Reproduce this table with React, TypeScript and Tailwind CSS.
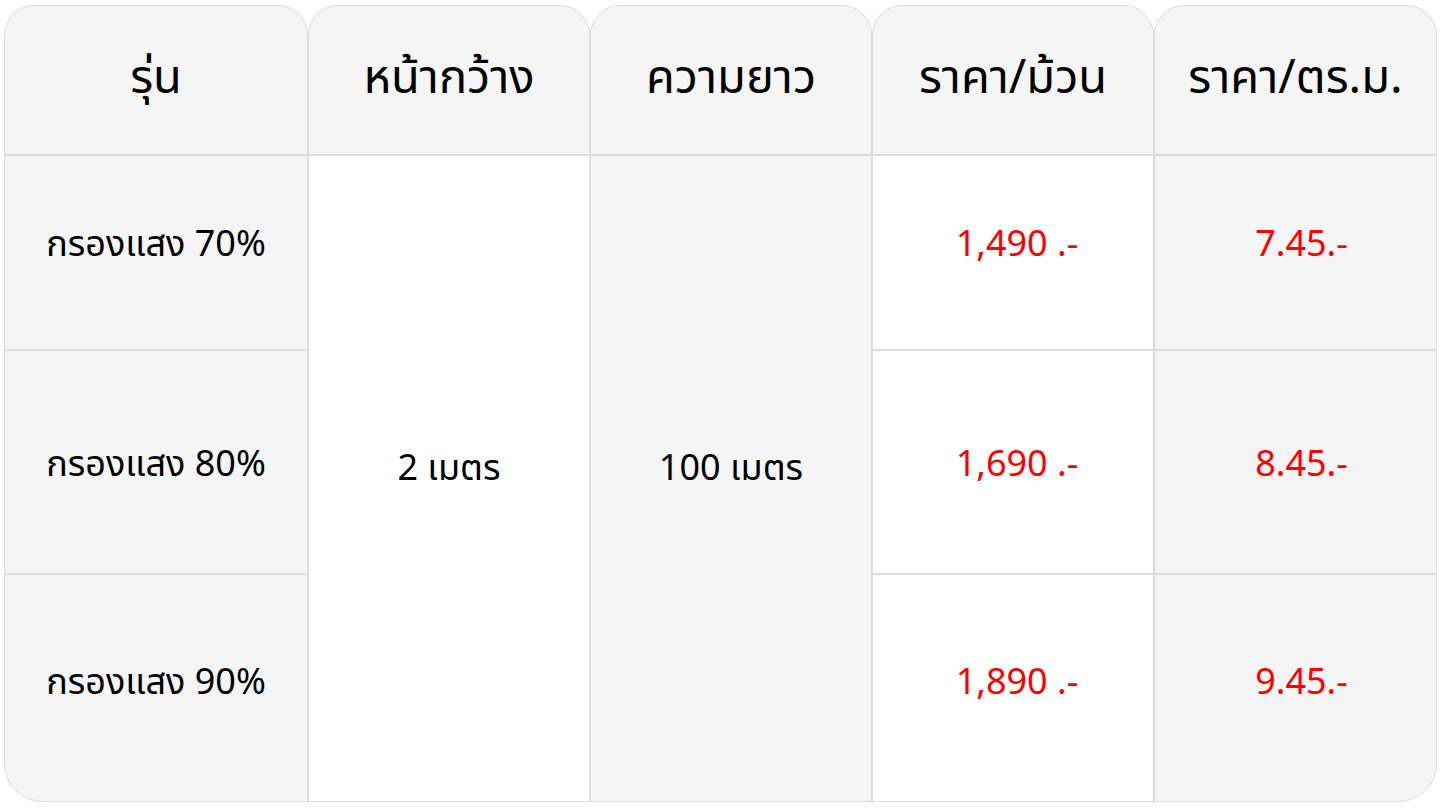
const rows = [
  { model: "กรองแสง 70%", roll: "1,490 .-", sqm: "7.45.-", pad: "pb-[15px]" },
  { model: "กรองแสง 80%", roll: "1,690 .-", sqm: "8.45.-", pad: "pt-[6px]" },
  { model: "กรองแสง 90%", roll: "1,890 .-", sqm: "9.45.-", pad: "pb-[10px]" },
];

const headers = ["รุ่น", "หน้ากว้าง", "ความยาว", "ราคา/ม้วน", "ราคา/ตร.ม."];

const cell = "flex items-center justify-center border border-[#dcdcdc]";

export default function App() {
  return (
    <div className="min-h-screen bg-white pl-[4px] pt-[5px] font-['Noto_Sans_Thai','Noto_Sans',sans-serif] text-black">
      <div className="grid w-[1433px] grid-cols-[304px_282px_282px_282px_283px] grid-rows-[150px_195px_224px_228px]">
        {headers.map((h) => (
          <div
            key={h}
            className={`${cell} rounded-t-[30px] bg-[#f5f5f5] pb-[2px] text-[47px]`}
          >
            {h}
          </div>
        ))}

        {rows.map((r, i) => (
          <div key={r.model} className="contents">
            <div
              className={`${cell} ${r.pad} bg-[#f5f5f5] text-[36px] ${i === 2 ? "rounded-bl-[38px]" : ""}`}
              style={{ gridColumn: 1, gridRow: i + 2 }}
            >
              {r.model}
            </div>
            <div
              className={`${cell} ${r.pad} bg-white pl-[8px] text-[36px] text-[#f00]`}
              style={{ gridColumn: 4, gridRow: i + 2 }}
            >
              {r.roll}
            </div>
            <div
              className={`${cell} ${r.pad} bg-[#f5f5f5] pl-[12px] text-[36px] text-[#f00] ${i === 2 ? "rounded-br-[38px]" : ""}`}
              style={{ gridColumn: 5, gridRow: i + 2 }}
            >
              {r.sqm}
            </div>
          </div>
        ))}

        <div className={`${cell} col-start-2 row-span-3 row-start-2 bg-white pb-[20px] text-[36px]`}>
          2 เมตร
        </div>
        <div className={`${cell} col-start-3 row-span-3 row-start-2 bg-[#f5f5f5] pb-[20px] text-[36px]`}>
          100 เมตร
        </div>
      </div>
    </div>
  );
}
